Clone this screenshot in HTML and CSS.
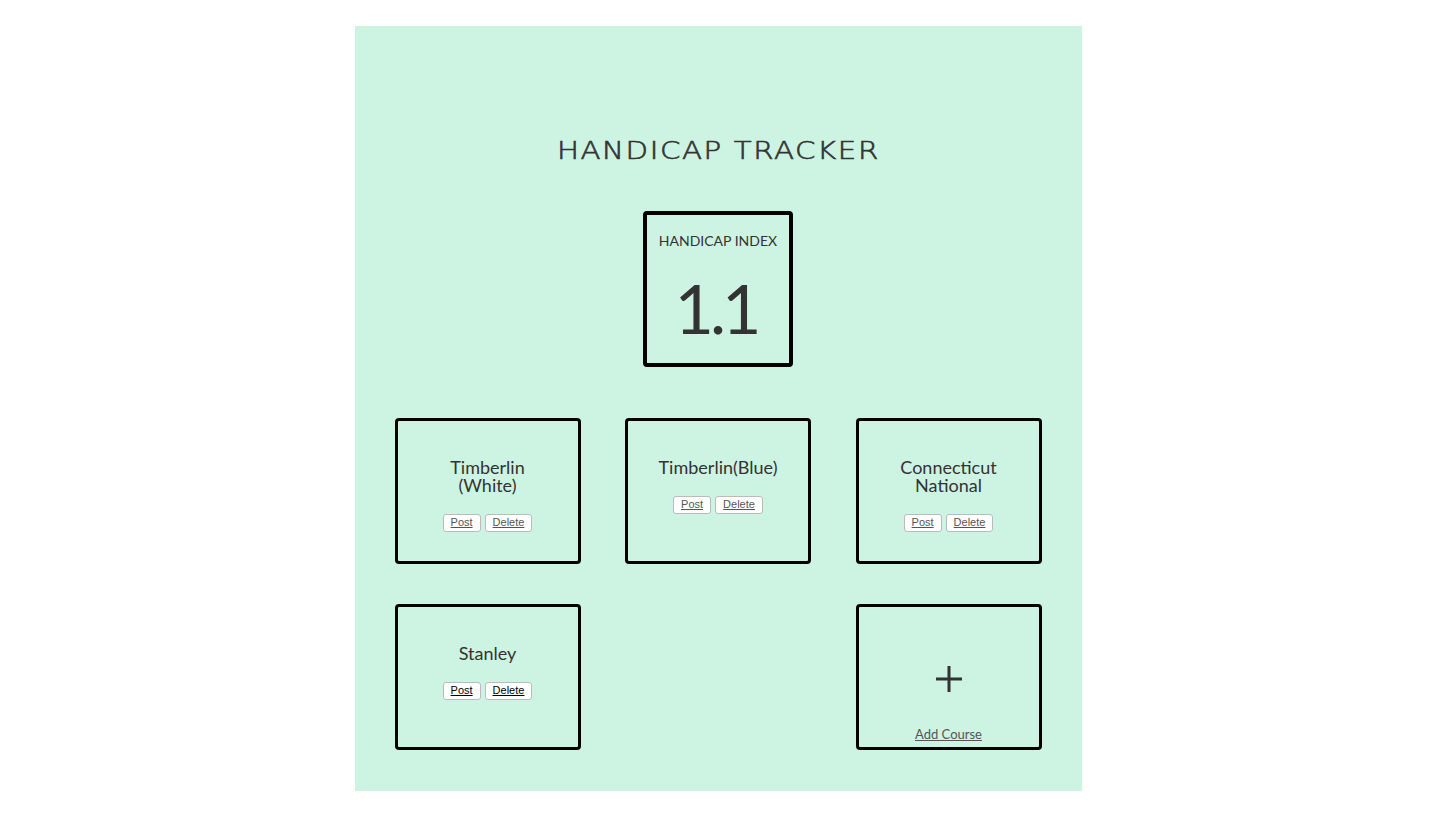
FILE: index.html
```html
<!DOCTYPE html>
<html lang="en">
<head>
  <meta charset="UTF-8">
  <meta name="viewport" content="width=device-width, initial-scale=1.0">
  <title>Handicap Tracker</title>
  <link rel="stylesheet" href="styles.css">
</head>
<body>

  <div class="app">
    <h1 class="title">HANDICAP TRACKER</h1>

    <!-- current index -->
    <div class="index-box">
      <div class="index-label">HANDICAP INDEX</div>
      <div class="index-value">1.1</div>
    </div>

    <div class="courses">
      <div class="course">
        <div class="course-name">Timberlin (White)</div>
        <div class="course-actions">
          <button class="btn">Post</button>
          <button class="btn">Delete</button>
        </div>
      </div>

      <div class="course">
        <div class="course-name">Timberlin(Blue)</div>
        <div class="course-actions">
          <button class="btn">Post</button>
          <button class="btn">Delete</button>
        </div>
      </div>

      <div class="course">
        <div class="course-name">Connecticut National</div>
        <div class="course-actions">
          <button class="btn">Post</button>
          <button class="btn">Delete</button>
        </div>
      </div>

      <div class="course">
        <div class="course-name">Stanley</div>
        <div class="course-actions">
          <button class="btn btn-dark">Post</button>
          <button class="btn btn-dark">Delete</button>
        </div>
      </div>

      <div class="course course-empty"></div>

      <div class="course course-add">
        <svg class="plus" width="26" height="26" viewBox="0 0 26 26">
          <path d="M13 0 V26 M0 13 H26" stroke="#333" stroke-width="3" fill="none"/>
        </svg>
        <a class="add-link" href="#">Add Course</a>
      </div>
    </div>
  </div>

</body>
</html>
```

FILE: styles.css
```css
body {
  margin: 0;
  padding-left: 2px;
  background: #fff;
  font-family: 'Lato', sans-serif;
  color: #333;
}

.app {
  width: 727px;
  margin: 26px auto 0;
  padding: 110px 40px 41px;
  box-sizing: border-box;
  background-color: #cdf3e2;
  display: flex;
  flex-direction: column;
  align-items: center;
}

.title {
  margin: 0;
  font-family: 'DejaVu Sans', sans-serif;
  font-weight: 200;
  font-size: 24px;
  line-height: 30px;
  letter-spacing: 1.3px;
  transform: scaleX(1.22);
  -webkit-text-stroke: 0.6px #333;
  color: #333;
}

.index-box {
  margin-top: 45px;
  width: 150px;
  height: 156px;
  box-sizing: border-box;
  border: 4px solid #000;
  border-radius: 4px;
  padding-top: 17px;
  text-align: center;
}

.index-label {
  font-size: 14px;
  line-height: 18px;
}

.index-value {
  margin-top: 20px;
  font-size: 68px;
  line-height: 76px;
  letter-spacing: -4px;
  padding-right: 4px;
}

.courses {
  margin-top: 51px;
  width: 100%;
  display: grid;
  grid-template-columns: repeat(3, 186px);
  justify-content: space-between;
  row-gap: 40px;
}

.course {
  height: 146px;
  box-sizing: border-box;
  border: 3px solid #000;
  border-radius: 4px;
  padding: 37px 28px 0;
  display: flex;
  flex-direction: column;
  align-items: center;
  text-align: center;
}

.course-empty {
  border: none;
}

.course-name {
  font-size: 18px;
  line-height: 18px;
}

.course-actions {
  margin-top: 20px;
  display: flex;
  gap: 4px;
}

.btn {
  font-family: 'Liberation Sans', sans-serif;
  font-size: 11px;
  line-height: 13px;
  padding: 1px 7px 2px;
  background: #fff;
  border: 1px solid #bbb;
  border-radius: 3px;
  color: #555;
  text-decoration: underline;
  cursor: pointer;
}

.btn-dark {
  color: #000;
}

.course-add {
  padding: 59px 0 5px;
}

.add-link {
  margin-top: auto;
  font-size: 13px;
  line-height: 16px;
  color: #555;
}
```
